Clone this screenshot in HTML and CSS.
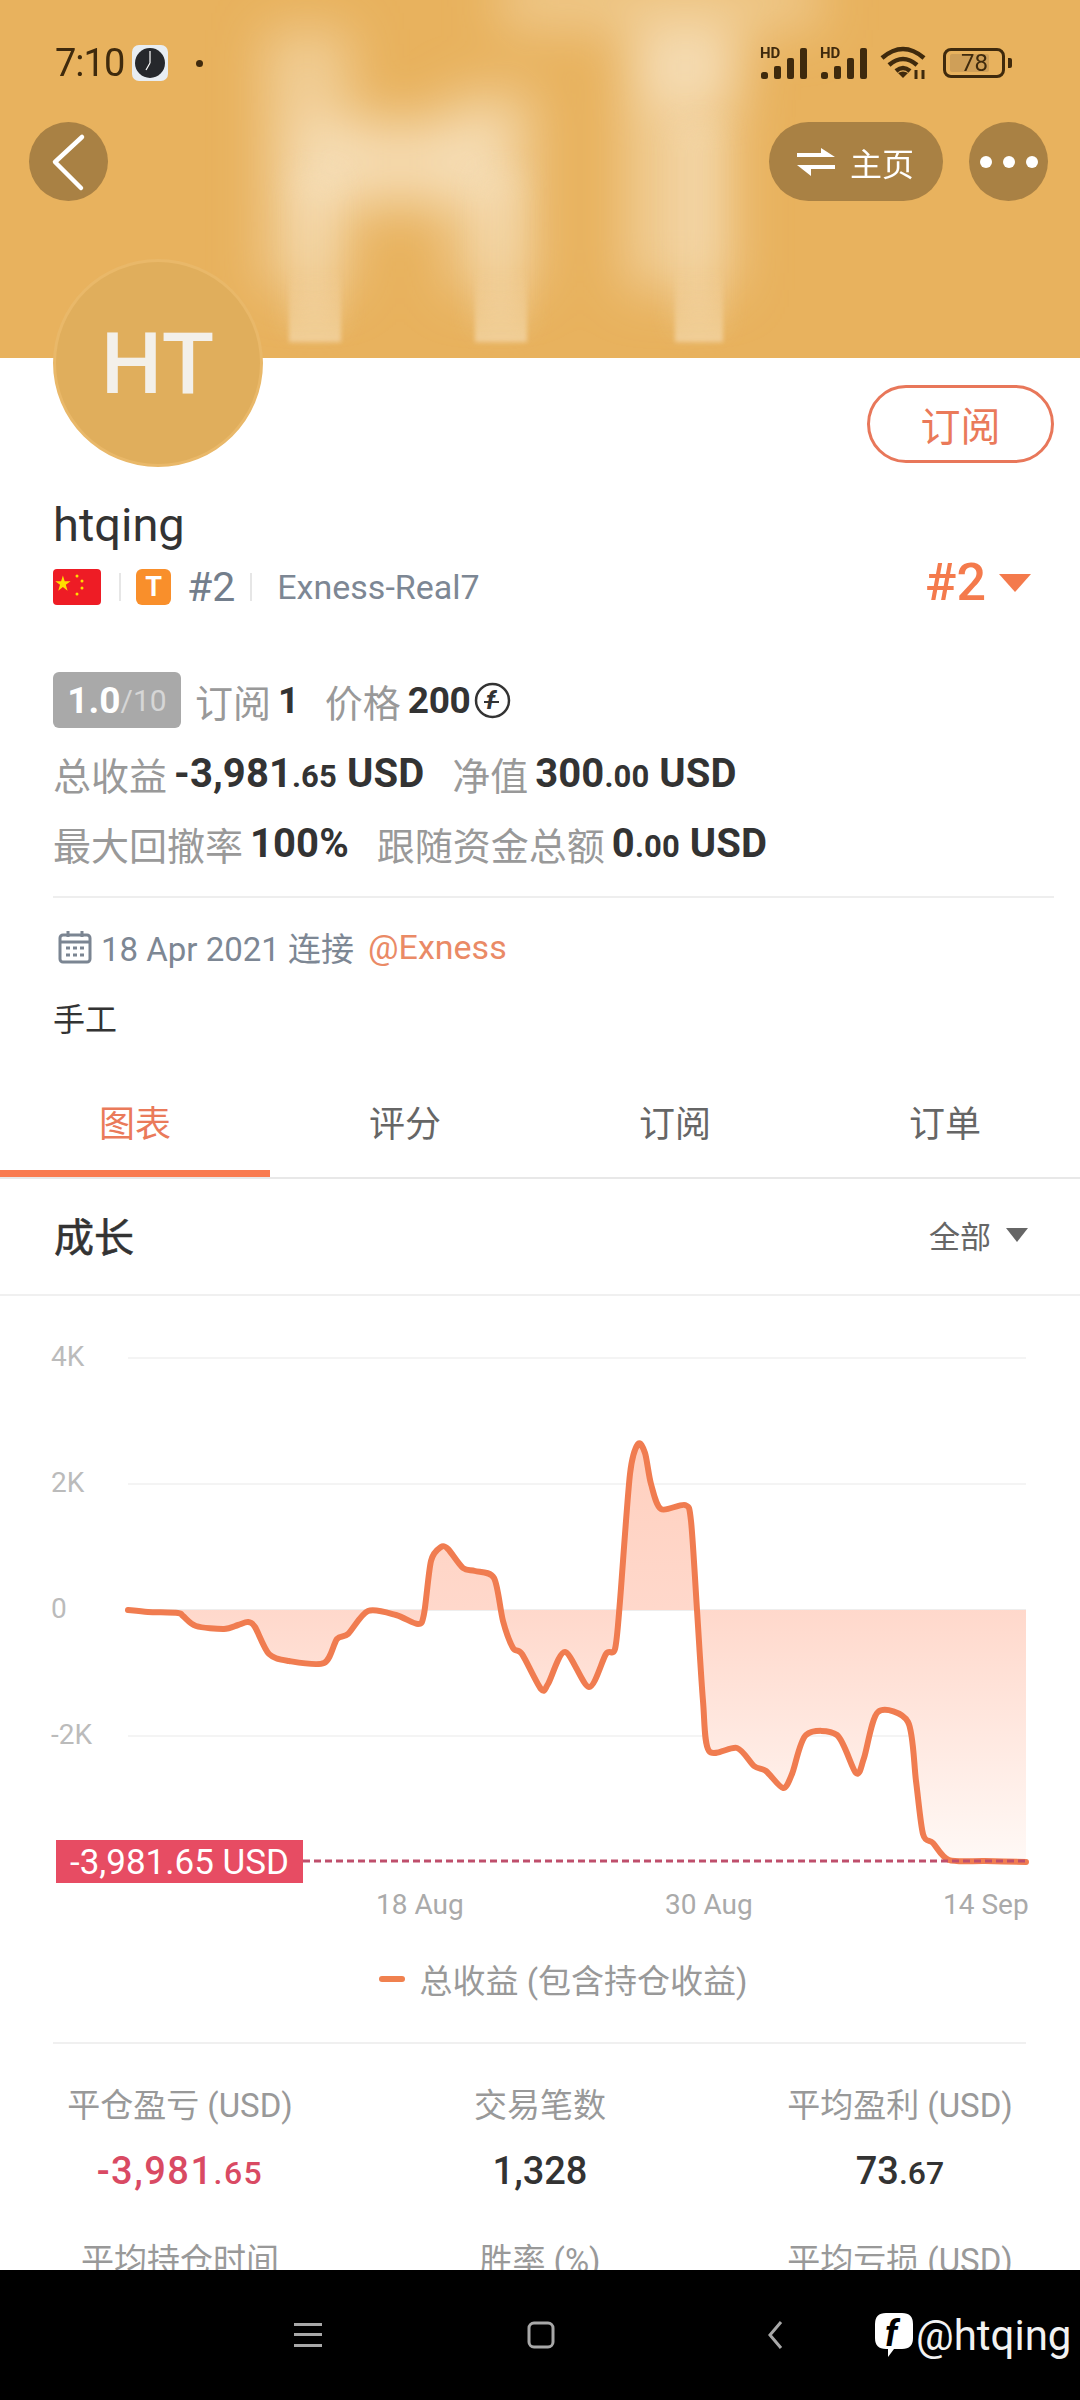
FILE: index.html

```html
<!DOCTYPE html>
<html lang="en">
<head>
  <meta charset="UTF-8">
  <meta name="viewport" content="width=device-width, initial-scale=1.0">
  <title>htqing</title>
  <link rel="stylesheet" href="styles.css">
</head>
<body>
  <div class="screen">
    <div class="page">
      <header class="cover">
        <!-- blurred big initials behind the bars -->
        <svg class="cover-art" width="1080" height="358" viewBox="0 0 1080 358">
          <defs>
            <filter id="blur-big" x="-50%" y="-50%" width="200%" height="200%"><feGaussianBlur stdDeviation="26"/></filter>
            <filter id="blur-mid" x="-50%" y="-50%" width="200%" height="200%"><feGaussianBlur stdDeviation="14"/></filter>
            <filter id="blur-small" x="-30%" y="-30%" width="160%" height="160%"><feGaussianBlur stdDeviation="2"/></filter>
            <linearGradient id="stem" x1="0" y1="0" x2="0" y2="1">
              <stop offset="0" stop-color="#f6e0bb" stop-opacity="0"/>
              <stop offset="1" stop-color="#f6e0bb" stop-opacity=".6"/>
            </linearGradient>
          </defs>
          <g filter="url(#blur-big)" fill="#f8e4c3">
            <rect x="265" y="30" width="85" height="260" opacity=".55"/>
            <rect x="450" y="90" width="85" height="200" opacity=".55"/>
            <rect x="300" y="120" width="200" height="85" opacity=".8"/>
            <rect x="625" y="30" width="110" height="260" opacity=".55"/>
            <rect x="640" y="30" width="100" height="70" opacity=".7"/>
            <rect x="500" y="-30" width="320" height="60" opacity=".45"/>
          </g>
          <g filter="url(#blur-mid)" fill="#f8e4c3" opacity=".3">
            <rect x="289" y="170" width="52" height="160"/>
            <rect x="475" y="170" width="52" height="160"/>
            <rect x="675" y="120" width="48" height="210"/>
          </g>
          <g filter="url(#blur-small)" fill="url(#stem)">
            <rect x="289" y="270" width="52" height="72"/>
            <rect x="475" y="270" width="52" height="72"/>
            <rect x="675" y="270" width="48" height="72"/>
          </g>
        </svg>

        <div class="status-bar">
          <div class="status-left">
            <span class="clock-time">7:10</span>
            <svg class="clock-icon" width="36" height="36" viewBox="0 0 36 36">
              <rect width="36" height="36" rx="7" fill="#e8edf2"/>
              <circle cx="18" cy="18" r="15" fill="#26282c"/>
              <path d="M18 18V6M18 18l-4 7" stroke="#fff" stroke-width="1.2" fill="none"/>
            </svg>
            <span class="status-dot"></span>
          </div>
          <div class="status-right">
            <svg width="48" height="32" viewBox="0 0 48 32" fill="#3f2a0d">
              <text x="0" y="11" class="hd">HD</text>
              <rect x="1" y="25" width="7" height="7" rx="2.500"/><rect x="14" y="19" width="7" height="13" rx="2"/><rect x="27" y="11" width="7" height="21" rx="2"/><rect x="40" y="1" width="7" height="31" rx="2"/>
            </svg>
            <svg width="48" height="32" viewBox="0 0 48 32" fill="#3f2a0d">
              <text x="0" y="11" class="hd">HD</text>
              <rect x="1" y="25" width="7" height="7" rx="2.500"/><rect x="14" y="19" width="7" height="13" rx="2"/><rect x="27" y="11" width="7" height="21" rx="2"/><rect x="40" y="1" width="7" height="31" rx="2"/>
            </svg>
            <svg class="wifi" width="48" height="34" viewBox="0 0 48 34" fill="none" stroke="#3f2a0d" stroke-width="4.500">
              <path d="M2 12Q23-6 44 12M9 19Q23 7 37 19M16 25Q23 19 30 25"/>
              <path d="M23 32l-5-5q5-3 10 0z" fill="#3f2a0d" stroke="none"/>
              <path d="M36 24v9M43 24v9" stroke-width="3"/>
            </svg>
            <div class="battery">
              <div class="battery-body"><span class="battery-level">78</span></div>
              <span class="battery-nub"></span>
            </div>
          </div>
        </div>

        <div class="toolbar">
          <button class="round-btn">
            <svg width="40" height="60" viewBox="0 0 40 60" fill="none" stroke="#fff" stroke-width="4.500" stroke-linecap="round" stroke-linejoin="round"><path d="M33 5L6 30l26 26"/></svg>
          </button>
          <div class="toolbar-right">
            <button class="home-btn">
              <svg width="38" height="28" viewBox="0 0 38 28" fill="#fff"><path d="M0 5h24V0l14 9H0zM0 17h38v4H14v7z"/></svg>
              <span>主页</span>
            </button>
            <button class="round-btn more-btn"><i></i><i></i><i></i></button>
          </div>
        </div>
      </header>

      <section class="profile">
        <div class="profile-top">
          <div class="avatar">HT</div>
          <button class="sub-btn">订阅</button>
        </div>
        <div class="name">htqing</div>
        <div class="meta">
          <svg class="flag" width="48" height="36" viewBox="0 0 48 36">
            <rect width="48" height="36" rx="4" fill="#ee1c25"/>
            <path d="M11 6l2 6.500h6.500l-5.300 4 2 6.500-5.200-4-5.200 4 2-6.500-5.300-4H9z" transform="translate(0 1) scale(.9)" fill="#ffdd00"/>
            <g fill="#ffdd00"><circle cx="24" cy="7" r="1.500"/><circle cx="29" cy="12" r="1.500"/><circle cx="29" cy="19" r="1.500"/><circle cx="24" cy="25" r="1.500"/></g>
          </svg>
          <span class="meta-sep first"></span>
          <span class="t-badge">T</span>
          <span class="meta-rank">#2</span>
          <span class="meta-sep"></span>
          <span class="meta-server">Exness-Real7</span>
          <div class="rank">#2<span class="rank-arrow"></span></div>
        </div>

        <div class="facts">
          <div class="fact-line top">
            <span class="score"><b>1.0</b><em>/10</em></span>
            <span class="label">订阅</span><span class="val">1</span>
            <span class="label next">价格</span><span class="val">200</span>
            <svg class="coin" width="37" height="37" viewBox="0 0 37 37" fill="none" stroke="#333" stroke-width="2.500">
              <circle cx="18.500" cy="18.500" r="16.500"/>
              <text x="12" y="27" class="coin-f">f</text>
              <path d="M10 20h15" stroke-width="2"/>
            </svg>
          </div>
          <div class="fact-line">
            <span class="label">总收益</span><span class="val">-3,981<small>.65</small> USD</span>
            <span class="label next">净值</span><span class="val">300<small>.00</small> USD</span>
          </div>
          <div class="fact-line">
            <span class="label">最大回撤率</span><span class="val">100%</span>
            <span class="label next">跟随资金总额</span><span class="val">0<small>.00</small> USD</span>
          </div>
        </div>

        <div class="joined">
          <svg width="34" height="34" viewBox="0 0 34 34" fill="none" stroke="#7b8592" stroke-width="3">
            <rect x="2" y="5" width="30" height="27" rx="3"/>
            <path d="M2 12h30M10 1v6M24 1v6"/>
            <path d="M8 18h4M15 18h4M22 18h4M8 25h4M15 25h4M22 25h4"/>
          </svg>
          <span>18 Apr 2021 连接</span>
          <span class="broker">@Exness</span>
        </div>
        <div class="bio">手工</div>
      </section>

      <nav class="tabs">
        <div class="tab active">图表</div>
        <div class="tab">评分</div>
        <div class="tab">订阅</div>
        <div class="tab">订单</div>
      </nav>

      <div class="section-head">
        <h2>成长</h2>
        <div class="range">全部<span class="range-arrow"></span></div>
      </div>

      <svg class="chart" width="1080" height="650" viewBox="0 1295 1080 650">
        <defs>
          <linearGradient id="area" gradientUnits="userSpaceOnUse" x1="0" y1="1439" x2="0" y2="1861">
            <stop offset="0" stop-color="#ffd0bf"/>
            <stop offset=".4" stop-color="#ffd8cb"/>
            <stop offset="1" stop-color="#fff9f6"/>
          </linearGradient>
        </defs>
        <g class="grid">
          <path d="M128 1357H1026M128 1483H1026M128 1735H1026"/>
          <path d="M128 1609H1026" class="zero"/>
        </g>
        <g class="y-labels">
          <text x="51" y="1365">4K</text>
          <text x="51" y="1491">2K</text>
          <text x="51" y="1617">0</text>
          <text x="51" y="1743">-2K</text>
        </g>
        <path id="growth-area" fill="url(#area)"/>
        <path id="growth-line" class="line"/>
        <path d="M303 1860H1026" class="last-line"/>
        <rect x="56" y="1839" width="247" height="43" fill="#e74c63"/>
        <text x="70" y="1873" class="last-tag">-3,981.65 USD</text>
        <g class="x-labels">
          <text x="376" y="1913">18 Aug</text>
          <text x="665" y="1913">30 Aug</text>
          <text x="943" y="1913">14 Sep</text>
        </g>
      </svg>

      <div class="legend"><span class="legend-mark"></span>总收益 (包含持仓收益)</div>

      <div class="summary">
        <div class="cell"><div class="cell-label">平仓盈亏 (USD)</div><div class="cell-val loss">-3,981<small>.65</small></div></div>
        <div class="cell"><div class="cell-label">交易笔数</div><div class="cell-val">1,328</div></div>
        <div class="cell"><div class="cell-label">平均盈利 (USD)</div><div class="cell-val">73<small>.67</small></div></div>
        <div class="cell"><div class="cell-label">平均持仓时间</div></div>
        <div class="cell"><div class="cell-label">胜率 (%)</div></div>
        <div class="cell"><div class="cell-label">平均亏损 (USD)</div></div>
      </div>
    </div>

    <footer class="navbar">
      <div class="nav-keys">
        <svg width="28" height="24" viewBox="0 0 28 24" fill="#a8a8a8"><rect y="0" width="28" height="3"/><rect y="10" width="28" height="3"/><rect y="21" width="28" height="3"/></svg>
        <svg width="28" height="28" viewBox="0 0 28 28" fill="none" stroke="#a8a8a8" stroke-width="3"><rect x="2" y="2" width="24" height="24" rx="5"/></svg>
        <svg class="nav-back" width="16" height="28" viewBox="0 0 16 28" fill="none" stroke="#a8a8a8" stroke-width="3"><path d="M14 1L3 14l11 13"/></svg>
      </div>
      <div class="watermark">
        <svg width="38" height="44" viewBox="0 0 38 44">
          <path d="M11 0h16q11 0 11 11v14q0 11-11 11h-8l-6 8v-8h-2Q0 36 0 25V11Q0 0 11 0z" fill="#fff"/>
          <text x="10" y="33" class="fb-f">f</text>
        </svg>
        <span>@htqing</span>
      </div>
    </footer>
  </div>
  <script src="chart.js"></script>
</body>
</html>
```

FILE: styles.css

```css
* {
  box-sizing: border-box;
}

body {
  margin: 0;
  background-color: #fff;
  font-family: Roboto, "Noto Sans CJK SC", sans-serif;
  color: #333;
}

button {
  font-family: inherit;
  border: none;
  padding: 0;
}

.screen {
  width: 1080px;
  height: 2400px;
  display: flex;
  flex-direction: column;
  overflow: hidden;
}

.page {
  height: 2270px;
  overflow: hidden;
  flex: none;
}

/* cover */
.cover {
  position: relative;
  height: 358px;
  padding-top: 40px;
  background-color: #e8b25e;
  overflow: hidden;
}

.cover-art {
  position: absolute;
  left: 0;
  top: 0;
}

.status-bar {
  position: relative;
  height: 46px;
  padding: 0 68px 0 55px;
  display: flex;
  justify-content: space-between;
  align-items: center;
}

.status-left {
  display: flex;
  align-items: center;
}

.clock-time {
  font-size: 38px;
  color: #3f2a0d;
  width: 77px;
  letter-spacing: -1px;
}

.status-dot {
  width: 7px;
  height: 7px;
  border-radius: 50%;
  background-color: #3f2a0d;
  margin-left: 28px;
}

.status-right {
  display: flex;
  align-items: center;
  gap: 12px;
}

.hd {
  font: 700 15px Roboto, sans-serif;
}

.battery {
  display: flex;
  align-items: center;
  gap: 3px;
  margin-left: 3px;
}

.battery-body {
  width: 62px;
  height: 30px;
  border: 3px solid #3f2a0d;
  border-radius: 8px;
  padding: 3px 4px;
}

.battery-level {
  display: block;
  width: 39px;
  height: 18px;
  background-color: #cf9f58;
  color: #3f2a0d;
  font-size: 24px;
  line-height: 18px;
  text-align: center;
  padding-left: 10px;
  border-radius: 2px;
}

.battery-nub {
  width: 4px;
  height: 10px;
  background-color: #3f2a0d;
  border-radius: 0 2px 2px 0;
}

.toolbar {
  position: relative;
  margin-top: 36px;
  padding: 0 32px 0 29px;
  display: flex;
  justify-content: space-between;
}

.round-btn {
  width: 79px;
  height: 79px;
  border-radius: 50%;
  background-color: #a98144;
  display: flex;
  align-items: center;
  justify-content: center;
}

.toolbar-right {
  display: flex;
  gap: 26px;
}

.home-btn {
  width: 174px;
  height: 79px;
  border-radius: 40px;
  background-color: #a98144;
  color: #fff;
  font-size: 32px;
  display: flex;
  align-items: center;
  padding-left: 28px;
  gap: 15px;
}

.more-btn {
  gap: 11px;
}

.more-btn i {
  width: 12px;
  height: 12px;
  border-radius: 50%;
  background-color: #fff;
}

/* profile */
.profile {
  padding: 0 26px 0 53px;
}

.profile-top {
  display: flex;
  justify-content: space-between;
  align-items: flex-start;
  height: 139px;
}

.avatar {
  position: relative;
  width: 210px;
  height: 208px;
  margin-top: -99px;
  border-radius: 50%;
  background-color: #e0ae5c;
  border: 3px solid #e9b869;
  color: #f3f0ea;
  font-size: 86px;
  font-weight: 500;
  letter-spacing: 1px;
  display: flex;
  align-items: center;
  justify-content: center;
}

.sub-btn {
  width: 187px;
  height: 78px;
  margin-top: 27px;
  border: 3px solid #e8775a;
  border-radius: 40px;
  background-color: #fff;
  color: #ea7a5a;
  font-size: 40px;
}

.name {
  font-size: 47px;
  line-height: 56px;
  color: #333;
}

.meta {
  display: flex;
  align-items: center;
  height: 36px;
  margin-top: 16px;
  color: #737e8c;
}

.meta-sep {
  width: 2px;
  height: 28px;
  background-color: #e6e6e6;
  margin: 0 25px 0 15px;
}

.meta-sep.first {
  margin: 0 15px 0 18px;
}

.t-badge {
  width: 35px;
  height: 36px;
  border-radius: 6px;
  background-color: #f98f2b;
  color: #fff;
  font-size: 27px;
  font-weight: 700;
  text-align: center;
  line-height: 36px;
}

.meta-rank {
  font-size: 41px;
  margin-left: 16px;
}

.meta-server {
  font-size: 34px;
  color: #7d8794;
}

.rank {
  margin-left: auto;
  margin-right: 23px;
  margin-bottom: 9px;
  font-size: 52px;
  font-weight: 500;
  color: #f47a4c;
  display: flex;
  align-items: center;
  gap: 13px;
}

.rank-arrow {
  border-left: 16px solid transparent;
  border-right: 16px solid transparent;
  border-top: 18px solid #f47a4c;
}

.facts {
  margin-top: 67px;
  display: flex;
  flex-direction: column;
  gap: 20px;
}

.fact-line {
  display: flex;
  align-items: center;
  height: 50px;
  font-size: 38px;
}

.fact-line.top {
  height: 56px;
}

.score {
  width: 128px;
  height: 56px;
  margin-right: 14px;
  border-radius: 6px;
  background-color: #a9a9a9;
  color: #fff;
  display: flex;
  align-items: center;
  justify-content: center;
}

.score b {
  font-size: 37px;
}

.score em {
  font-style: normal;
  font-size: 30px;
  color: #d6d6d6;
}

.label {
  color: #999;
  margin-right: 7px;
}

.label.next {
  margin-left: 28px;
}

.fact-line.top .label.next {
  margin-left: 26px;
}

.val {
  font-weight: 700;
  font-size: 40px;
  color: #333;
  letter-spacing: .1px;
}

.val small {
  font-size: 31px;
}

.fact-line.top .val {
  font-size: 37px;
  letter-spacing: -.4px;
}

.coin {
  margin-left: 4px;
}

.coin-f {
  font: italic 700 26px Roboto, sans-serif;
  fill: #333;
  stroke: none;
}

.joined {
  margin-top: 28px;
  padding: 25px 0 0 5px;
  border-top: 2px solid #eee;
  display: flex;
  align-items: center;
  font-size: 33px;
  color: #7d8794;
  gap: 9px;
}

.broker {
  color: #ea8a66;
  font-size: 34px;
  margin-left: 5px;
}

.bio {
  margin-top: 29px;
  font-size: 32px;
  line-height: 40px;
  color: #333;
}

/* tabs */
.tabs {
  display: flex;
  margin-top: 31px;
  border-bottom: 2px solid #e8e8e8;
}

.tab {
  width: 270px;
  height: 106px;
  padding-top: 30px;
  text-align: center;
  font-size: 36px;
  line-height: 48px;
  color: #666;
}

.tab.active {
  color: #ea7a5a;
  border-bottom: 7px solid #f97b50;
}

.section-head {
  height: 117px;
  padding: 0 52px 4px 54px;
  border-bottom: 2px solid #f0f0f0;
  display: flex;
  justify-content: space-between;
  align-items: center;
}

.section-head h2 {
  margin: 0;
  font-size: 40px;
  font-weight: 400;
  -webkit-text-stroke: .6px #333;
  color: #333;
}

.range {
  font-size: 31px;
  color: #666;
  display: flex;
  align-items: center;
  gap: 15px;
}

.range-arrow {
  border-left: 11px solid transparent;
  border-right: 11px solid transparent;
  border-top: 14px solid #666;
}

/* chart */
.chart {
  display: block;
}

.grid path {
  stroke: #f4f4f4;
  stroke-width: 2;
}

.grid path.zero {
  stroke: #eee;
}

.y-labels text {
  font-size: 28px;
  fill: #bbb;
}

.x-labels text {
  font-size: 28px;
  fill: #aaa;
}

.line {
  fill: none;
  stroke: #f07c50;
  stroke-width: 6;
  stroke-linejoin: round;
  stroke-linecap: round;
}

.last-line {
  stroke: #bf4f6c;
  stroke-width: 3;
  stroke-dasharray: 7 4;
}

.last-tag {
  font-size: 35px;
  fill: #fff;
}

.legend {
  height: 66px;
  padding-left: 46px;
  display: flex;
  align-items: center;
  justify-content: center;
  font-size: 33px;
  color: #999;
}

.legend-mark {
  width: 26px;
  height: 6px;
  border-radius: 3px;
  background-color: #f0814f;
  margin-right: 15px;
}

.summary {
  margin-top: 30px;
  padding-top: 40px;
  display: grid;
  grid-template-columns: repeat(3, 360px);
  row-gap: 40px;
  background: linear-gradient(#f0f0f0, #f0f0f0) 53px 0 / 973px 2px no-repeat;
}

.cell {
  text-align: center;
}

.cell-label {
  font-size: 33px;
  line-height: 48px;
  color: #999;
}

.cell-val {
  margin-top: 17px;
  font-size: 38px;
  font-weight: 500;
  line-height: 48px;
  color: #333;
}

.cell-val small {
  font-size: 32px;
}

.cell-val.loss {
  color: #d94a63;
  letter-spacing: 1.5px;
}

/* bottom bar */
.navbar {
  position: relative;
  flex: 1;
  background-color: #000;
  display: flex;
  align-items: center;
}

.nav-keys {
  margin-left: 294px;
  display: flex;
  align-items: center;
  gap: 205px;
}

.nav-back {
  margin-left: 7px;
}

.watermark {
  margin-left: 92px;
  display: flex;
  align-items: center;
  gap: 3px;
  color: #f2f2f2;
  font-size: 42px;
}

.fb-f {
  font: italic 700 36px Roboto, sans-serif;
  fill: #000;
}
```

FILE: chart.js

```js
// growth curve, points are in page pixels
const points = [
  [128,1609],[148,1611],[178,1612],[183,1615],[196,1625],[224,1628],[238,1624],[248,1621],[255,1626],
  [269,1653],[289,1660],[324,1662],[337,1638],[348,1633],[368,1610],[396,1614],[418,1623],[424,1613],
  [431,1560],[441,1546],[448,1548],[463,1567],[475,1570],[494,1577],[503,1620],[513,1647],[522,1653],
  [541,1688],[548,1683],[565,1651],[589,1686],[606,1653],[615,1648],[620,1600],[630,1473],[638,1443],
  [645,1452],[651,1483],[661,1508],[685,1504],[691,1520],[697,1609],[703,1700],[709,1750],[737,1747],
  [754,1765],[766,1770],[783,1787],[792,1773],[806,1734],[837,1734],[856,1772],[864,1757],[878,1711],
  [908,1721],[916,1780],[923,1833],[933,1842],[949,1859],[985,1860],[1026,1861]
];

function smoothPath(pts) {
  let d = "M" + pts[0][0] + " " + pts[0][1];
  for (let i = 0; i < pts.length - 1; i++) {
    const p0 = pts[i - 1] || pts[i];
    const p1 = pts[i];
    const p2 = pts[i + 1];
    const p3 = pts[i + 2] || p2;
    const c1x = p1[0] + (p2[0] - p0[0]) / 7;
    const c1y = p1[1] + (p2[1] - p0[1]) / 7;
    const c2x = p2[0] - (p3[0] - p1[0]) / 7;
    const c2y = p2[1] - (p3[1] - p1[1]) / 7;
    d += "C" + c1x.toFixed(1) + " " + c1y.toFixed(1) + " " + c2x.toFixed(1) + " " + c2y.toFixed(1) + " " + p2[0] + " " + p2[1];
  }
  return d;
}

const d = smoothPath(points);
document.getElementById("growth-line").setAttribute("d", d);
document.getElementById("growth-area").setAttribute("d", d + "L1026 1609L128 1609Z");
```
